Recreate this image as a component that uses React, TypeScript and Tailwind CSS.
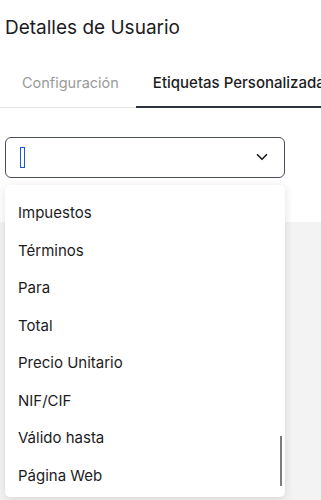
import React from 'react';
import { ChevronDown } from 'lucide-react';

const labels = [
  'Impuestos',
  'Términos',
  'Para',
  'Total',
  'Precio Unitario',
  'NIF/CIF',
  'Válido hasta',
  'Página Web',
];

export default function App() {
  return (
    <div className="relative h-[500px] w-[321px] overflow-hidden bg-[#f3f3f3] font-['Inter',sans-serif] text-[#1c1c1e]">
      <div className="bg-white h-[222px]">
        <h1 className="pt-[15px] pl-[5px] text-[19px] leading-[26px] font-normal">Detalles de Usuario</h1>

        <div className="mt-[29px] flex border-b border-[#e5e5e5] pl-[5px] text-[14.5px] whitespace-nowrap">
          <button className="px-[17px] pb-[12px] pt-[2px] text-[#9a9a9a]">Configuración</button>
          <button className="-mb-px border-b-2 border-[#2d3340] px-[17px] pb-[11px] pt-[2px] text-[15px] font-medium">Etiquetas Personalizadas</button>
        </div>

        <div className="mx-[5px] mt-[29px] flex h-[41px] w-[280px] items-center rounded-[6px] border border-[#4a4f5a] px-[14px]">
          <span className="h-[21px] w-[5px] border border-[#1a56db]" />
          <ChevronDown className="ml-auto mr-[-1px] h-[18px] w-[18px]" strokeWidth={2.2} />
        </div>
      </div>

      <div className="absolute left-[5px] top-[185px] h-[312px] w-[280px] rounded-[5px] bg-white shadow-[0_2px_10px_rgba(0,0,0,0.12)]">
        <ul className="pt-[9px] pl-[13px] text-[15px]">
          {labels.map((l) => (
            <li key={l} className="h-[37.5px] leading-[37.5px]">{l}</li>
          ))}
        </ul>
        <div className="absolute right-[3px] top-[251px] h-[50px] w-[2px] bg-[#7d7d7d]" />
      </div>
    </div>
  );
}
